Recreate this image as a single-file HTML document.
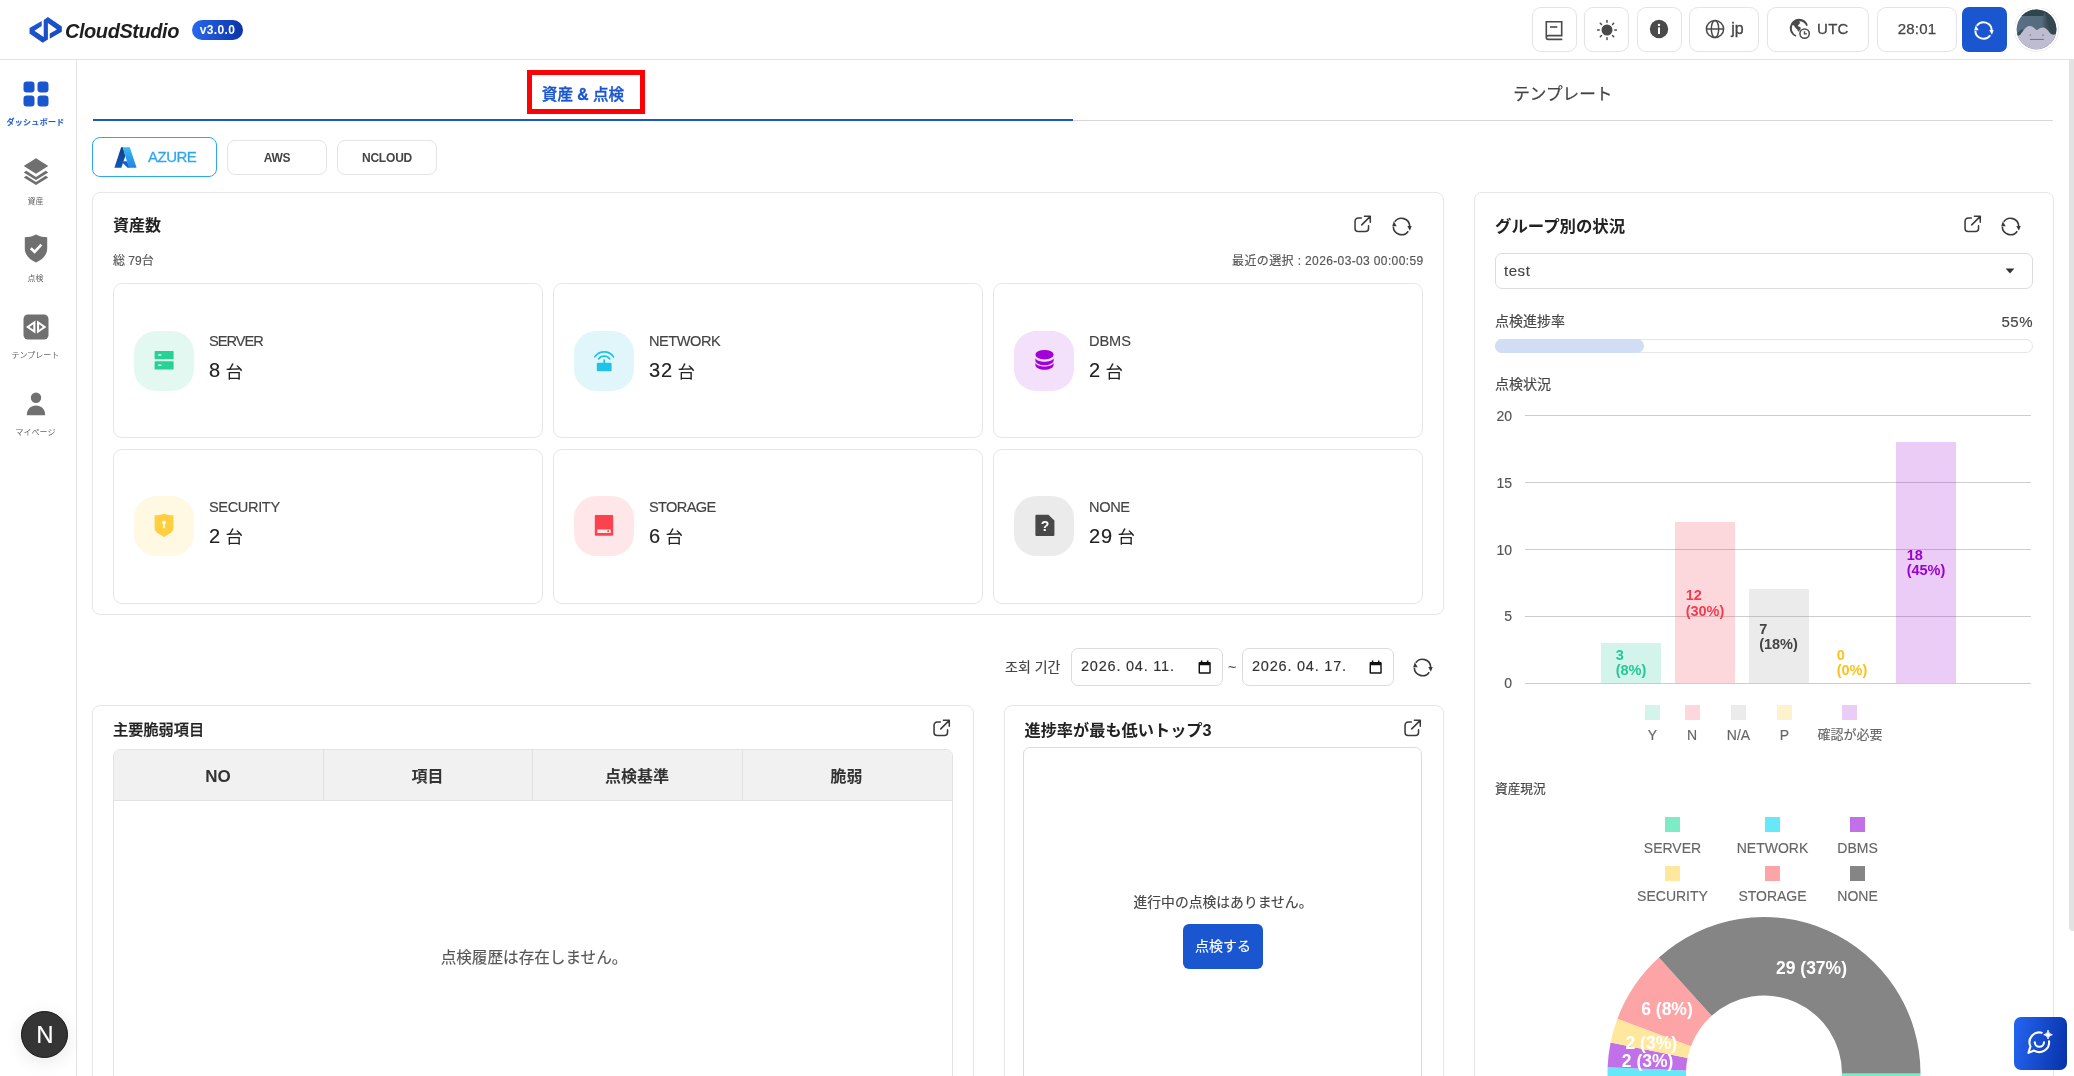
<!DOCTYPE html>
<html lang="ja">
<head>
<meta charset="utf-8">
<title>CloudStudio</title>
<style>
*{box-sizing:border-box;margin:0;padding:0}
html,body{width:2074px;height:1076px;overflow:hidden;background:#fff}
body{will-change:transform;position:relative;font-family:"Liberation Sans","Noto Sans CJK JP",sans-serif;color:#333;font-size:14px}
.a{position:absolute}
.t{position:absolute;white-space:nowrap;line-height:20px}
.t:not(.b){-webkit-text-stroke-width:.15px}
.c{transform:translateX(-50%)}
.r{transform:translateX(-100%)}
.b{font-weight:700}
svg{display:block}
/* header */
#hdr{left:0;top:0;width:2074px;height:60px;border-bottom:1px solid #e2e2e2;background:#fff}
.hb{position:absolute;top:7px;height:45px;border:1px solid #e4e4e4;border-radius:9px;background:#fff}
/* sidebar */
#side{left:0;top:60px;width:77px;height:1016px;border-right:1px solid #e2e2e2;background:#fff}
.sl{position:absolute;left:0;width:71px;text-align:center;font-size:8px;line-height:12px;color:#666;white-space:nowrap}
/* cards */
.card{position:absolute;border:1px solid #e6e6e6;border-radius:8px;background:#fff}
.ic{position:absolute;width:60px;height:60px;border-radius:22px}
.lab{font-size:14.600px;margin-top:-.4px;color:#444;-webkit-text-stroke:.2px #444}
.val{font-size:20px;color:#222;line-height:26px;letter-spacing:.9px;word-spacing:-2px;margin-top:-.9px;-webkit-text-stroke:.2px #222}.val span{font-size:17.500px;position:relative;top:.5px;-webkit-text-stroke:0}
</style>
</head>
<body>
<!-- HEADER -->
<div id="hdr" class="a">
<!-- logo -->
<svg class="a" style="left:28px;top:15px" width="36" height="30" viewBox="0 0 36 30">
<defs><linearGradient id="lg1" x1="0" y1="0" x2="1" y2="1"><stop offset="0" stop-color="#1f5ad6"/><stop offset="1" stop-color="#1647bd"/></linearGradient></defs>
<path fill="url(#lg1)" d="M19.900 2 L33.800 11.400 V16.700 L21.750 23.750 V18.400 L28.900 14.400 L19.900 8 V24.400 L14.700 27.800 L1.500 18.400 V13.050 L13.700 6 V11.050 L6.400 15.700 L15.700 21.900 V5Z"/>
</svg>
<div class="t b" style="left:65px;top:18.500px;font-size:20px;line-height:24px;font-style:italic;color:#1f1f1f;letter-spacing:-.45px">CloudStudio</div>
<div class="a" style="left:192px;top:20px;width:51px;height:20px;border-radius:10px;background:linear-gradient(90deg,#2968ee,#0b34a6)"></div>
<div class="t b c" style="left:217.5px;top:20px;font-size:12px;line-height:20px;color:#fff;letter-spacing:.35px">v3.0.0</div>
<!-- buttons -->
<div class="hb" style="left:1532px;width:45px"><svg class="a" style="left:12.400px;top:12.500px" width="19" height="20" viewBox="0 0 19 20" fill="none" stroke="#4a4a4a" stroke-width="1.600"><path d="M1.300 16.500 V.800 H16.700 V14.600 H3.200 A1.900 1.900 0 0 0 3.200 18.400 H17.300"/><path d="M5 6 H12.300"/></svg></div>
<div class="hb" style="left:1584px;width:45px"><svg class="a" style="left:10.500px;top:11.200px" width="22" height="22" viewBox="0 0 22 22"><circle cx="11" cy="11" r="5.500" fill="#4a4a4a"/><g stroke="#4a4a4a" stroke-width="1.5" stroke-linecap="round"><path d="M11 1.6V3.2M11 18.8V20.4M1.6 11H3.2M18.8 11H20.4M4.3 4.3L5.5 5.5M16.5 16.5L17.7 17.7M4.3 17.7L5.5 16.5M16.5 5.5L17.7 4.3"/></g></svg></div>
<div class="hb" style="left:1637px;width:45px"><svg class="a" style="left:11px;top:11px" width="20" height="20" viewBox="0 0 20 20"><circle cx="10" cy="10" r="9.2" fill="#4a4a4a"/><circle cx="10" cy="5.9" r="1.2" fill="#fff"/><rect x="9" y="8.4" width="2" height="6.6" fill="#fff"/></svg></div>
<div class="hb" style="left:1689px;width:70px"><svg class="a" style="left:15px;top:11px" width="20" height="20" viewBox="0 0 20 20" fill="none" stroke="#4a4a4a" stroke-width="1.5"><circle cx="10" cy="10" r="8.6"/><ellipse cx="10" cy="10" rx="3.7" ry="8.6"/><path d="M1.4 10H18.6"/></svg><div class="t" style="left:41.300px;top:10px;font-size:16px;line-height:22px;color:#444;-webkit-text-stroke:.3px #444">jp</div></div>
<div class="hb" style="left:1767px;width:102px"><svg class="a" style="left:21px;top:10px" width="22" height="22" viewBox="0 0 22 22"><path fill="#4a4a4a" d="M10 .8a9.3 9.3 0 0 0-3.2 18l.5-1.5A7.7 7.7 0 0 1 3.600 7.000c1.400.300 2.200 1.200 2.600 2.600.5 1.500 2 1.200 2.400 2.700.2.800.8 1.300 1.600 1.200l.5-1.500c1.200-.500 1.300-1.900.6-2.800-.6-.700-1.800-.300-2.200-1.200-.4-1 .9-1.500 1.500-2.300.5-.700.400-1.900-.400-2.500A7.700 7.700 0 0 1 17.300 8l1.500-.4A9.300 9.300 0 0 0 10 .8z"/><circle cx="15.600" cy="15.600" r="4.700" fill="none" stroke="#4a4a4a" stroke-width="1.500"/><path d="M15.500 13.200v2.700h2.400" fill="none" stroke="#4a4a4a" stroke-width="1.400"/></svg><div class="t" style="left:49px;top:10px;font-size:15px;line-height:22px;color:#444;letter-spacing:.3px;-webkit-text-stroke:.3px #444">UTC</div></div>
<div class="hb" style="left:1877px;width:80px"><div class="t c" style="left:39px;top:10px;font-size:15px;line-height:22px;color:#444;letter-spacing:.2px;-webkit-text-stroke:.25px #444">28:01</div></div>
<div class="a" style="left:1962px;top:7px;width:45px;height:45px;border-radius:7px;background:#1a56d0"><svg class="a" style="left:11.400px;top:12.600px" width="21" height="21" viewBox="0 0 21 21" fill="none" stroke="#fff" stroke-width="2"><path d="M3.780 5.800 A8.200 8.200 0 0 1 18.700 10.200"/><path d="M17.220 15.200 A8.200 8.200 0 0 1 2.300 10.800"/><path d="M16.300 9.900 H20.700 L18.900 14.700Z" fill="#fff" stroke="none"/><path d="M1.200 10.300 H5.700 L2.800 5.200Z" fill="#fff" stroke="none"/></svg></div>
<!-- avatar -->
<svg class="a" style="left:2015px;top:8px" width="44" height="44" viewBox="0 0 44 44"><defs><clipPath id="av"><circle cx="21.500" cy="21.300" r="19.900"/></clipPath><linearGradient id="avg" x1="0" y1="0" x2="1" y2="0"><stop offset="0" stop-color="#586f86"/><stop offset=".6" stop-color="#556c7c"/><stop offset=".72" stop-color="#3b505a"/><stop offset="1" stop-color="#35485a"/></linearGradient></defs><circle cx="21.500" cy="21.300" r="22.100" fill="#fff" stroke="#e9e9e9" stroke-width=".9"/><g clip-path="url(#av)"><rect width="44" height="44" fill="url(#avg)"/><path d="M0 0 H44 V9 L30 4.500 L28 8 H5 L0 12Z" fill="#2f454b"/><path d="M29.500 4.500 L44 9 V26 L36 25 Z" fill="#34474f" opacity=".85"/><path d="M0 29 L2.100 27.850 C4 27.600 4.800 27 5.500 26.300 C6.700 25 7.600 23.300 8.600 22.100 C10.200 20.300 11.800 18.500 13.800 18.100 C15.200 17.900 16.400 18.100 17.500 18.700 C19 19.600 20.400 21.600 21.900 21.900 C23 21.800 24.200 20.500 25.300 20 C26.500 19.500 27.700 19.300 28.900 19.500 C30.300 19.900 31.500 21 32.600 22.100 C33.700 23.300 34.600 24.900 35.700 25.800 C36.500 26.500 37.400 26.800 38.300 26.800 C39.600 26.700 40.800 26 42 25.250 L44 24 V44 H0Z" fill="#bebcd1"/><path d="M2 28 C4 27.600 4.800 27 5.500 26.300 C6.700 25 7.600 23.300 8.600 22.100 L7 21 L1.500 26Z" fill="#2f454b" opacity=".8"/><circle cx="15.300" cy="27.100" r=".95" fill="#8d8aa0"/><circle cx="28" cy="27.200" r=".95" fill="#8d8aa0"/><path d="M14.900 31.450H28.900" stroke="#6d6a80" stroke-width=".9"/></g></svg>
</div>
<!-- SIDEBAR -->
<div id="side" class="a">
<!-- coords relative to sidebar (top=60) -->
<svg class="a" style="left:23px;top:21px" width="26" height="26" viewBox="0 0 26 26" fill="#1a56d0"><rect x="0.500" y="0.500" width="11" height="11" rx="3.200"/><rect x="14.500" y="0.500" width="11" height="11" rx="3.200"/><rect x="0.500" y="14.500" width="11" height="11" rx="3.200"/><rect x="14.500" y="14.500" width="11" height="11" rx="3.200"/></svg>
<div class="sl" style="top:57px;color:#1a56d0;letter-spacing:.3px;font-weight:500;-webkit-text-stroke:.2px #1a56d0">ダッシュボード</div>
<svg class="a" style="left:23px;top:98px" width="26" height="28" viewBox="0 0 26 28" fill="#707070"><path d="M13 0.300 L25.300 8 L13 15.700 L0.700 8 Z"/><path d="M3.300 12.800 L13 18.900 L22.700 12.800 L25.300 14.400 L13 22.100 L0.700 14.400 Z"/><path d="M3.300 17.800 L13 23.900 L22.700 17.800 L25.300 19.400 L13 27.100 L0.700 19.400 Z"/></svg>
<div class="sl" style="top:136px">資産</div>
<svg class="a" style="left:24px;top:174px" width="24" height="29" viewBox="0 0 24 29"><path fill="#707070" d="M12 0.500 C8 2.600 4.500 3.200 0.800 3.200 V14.500 C0.800 21 5.500 25.600 12 28.500 C18.500 25.600 23.200 21 23.200 14.500 V3.200 C19.500 3.200 16 2.600 12 0.500Z"/><path d="M6.800 14.200 L10.600 17.800 L17.400 10.600" fill="none" stroke="#fff" stroke-width="2.600"/></svg>
<div class="sl" style="top:213px">点検</div>
<svg class="a" style="left:23px;top:254px" width="26" height="26" viewBox="0 0 26 26"><rect x="0.500" y="0.500" width="25" height="25" rx="4.500" fill="#707070"/><path fill="#fff" fill-rule="evenodd" d="M12.400 6.400 L3 13 L12.400 19.600 Z M10.300 10.300 V15.700 L6.500 13 Z"/><path fill="#fff" fill-rule="evenodd" d="M14 6.400 L23.400 13 L14 19.600 Z M16.100 10.300 V15.700 L19.900 13 Z"/></svg>
<div class="sl" style="top:290px">テンプレート</div>
<svg class="a" style="left:26px;top:332px" width="20" height="24" viewBox="0 0 20 24" fill="#707070"><circle cx="10" cy="5.700" r="5.200"/><path d="M0.800 23.200 C0.800 16.800 4.800 13.400 10 13.400 C15.200 13.400 19.200 16.800 19.200 23.200 Z"/></svg>
<div class="sl" style="top:367px">マイページ</div>
<!-- N button -->
<div class="a" style="left:21px;top:951px;width:47px;height:47px;border-radius:50%;background:#353535;border:1.500px solid #141414;box-shadow:0 4px 18px rgba(0,0,0,.09)"></div>
<div class="t c" style="left:44.800px;top:962.300px;font-size:24px;line-height:26px;color:#fff">N</div>
</div>
<!-- MAIN -->
<div id="main">
<!-- tabs -->
<div class="a" style="left:93px;top:119px;width:980px;height:2px;background:#1a56d0"></div>
<div class="a" style="left:1073px;top:120px;width:980px;height:1px;background:#d8d8d8"></div>
<div class="a" style="left:526.500px;top:70.300px;width:118px;height:44px;border:5px solid #fb0207"></div>
<div class="t c" style="left:583px;top:82.500px;font-size:15.600px;font-weight:500;-webkit-text-stroke:.35px #1a56d0;line-height:24px;color:#1a56d0">資産 <b>&amp;</b> 点検</div>
<div class="t c" style="left:1562.800px;top:83.400px;font-size:16.600px;line-height:24px;color:#444;-webkit-text-stroke:.25px #444">テンプレート</div>
<!-- provider buttons -->
<div class="a" style="left:92px;top:137px;width:125px;height:40px;border:1px solid #2ea7f2;border-radius:8px"></div>
<svg class="a" style="left:114px;top:146px" width="23" height="23" viewBox="0 0 23 23"><defs><linearGradient id="az1" x1="0" y1="0" x2="0" y2="1"><stop offset="0" stop-color="#123c84"/><stop offset="1" stop-color="#0f58bd"/></linearGradient><linearGradient id="az2" x1="0" y1="0" x2="0" y2="1"><stop offset="0" stop-color="#36bff3"/><stop offset="1" stop-color="#2580e2"/></linearGradient></defs><path fill="url(#az1)" d="M7.150 1.140 H8.900 L11.300 9.900 L7.400 21.870 H.4Z"/><path fill="#1160d3" d="M6.900 15.200 H13 L15.600 21.870 H13.660Z"/><path fill="url(#az2)" d="M8.840 1.140 H15.830 L22.580 21.870 H15 L12.940 15.200 L11.250 9.900Z"/></svg>
<div class="t" style="left:148px;top:146.600px;font-size:15px;color:#2ea7f2;letter-spacing:-.5px;-webkit-text-stroke:.3px #2ea7f2">AZURE</div>
<div class="a" style="left:227px;top:140px;width:100px;height:35px;border:1px solid #e4e4e4;border-radius:8px"></div>
<div class="t b c" style="left:277px;top:148px;font-size:12px;color:#444;letter-spacing:-.2px">AWS</div>
<div class="a" style="left:337px;top:140px;width:100px;height:35px;border:1px solid #e4e4e4;border-radius:8px"></div>
<div class="t b c" style="left:387px;top:148px;font-size:12px;color:#444;letter-spacing:-.2px">NCLOUD</div>
<!-- asset card -->
<div class="card" style="left:92px;top:192px;width:1352px;height:423px"></div>
<div class="t b" style="left:113px;top:214px;font-size:16px;line-height:24px;color:#222">資産数</div>
<svg class="a" style="left:1353.2px;top:214.6px" width="18.600" height="18.600" viewBox="0 0 20 20" fill="none" stroke="#3a3a3a" stroke-width="1.650" stroke-linecap="round" stroke-linejoin="round"><path d="M9 3.300 H5.500 A3.300 3.300 0 0 0 2.200 6.600 V14.500 A3.300 3.300 0 0 0 5.500 17.800 H13.400 A3.300 3.300 0 0 0 16.700 14.500 V11.700"/><path d="M9.400 10.600 L18 2 M12.300 1.400 H18.600 V7.700"/></svg>
<svg class="a" style="left:1390.5px;top:215.5px" width="21" height="21" viewBox="0 0 21 21" fill="none" stroke="#3a3a3a" stroke-width="1.600"><path d="M3.780 5.800 A8.200 8.200 0 0 1 18.700 10.200"/><path d="M17.220 15.200 A8.200 8.200 0 0 1 2.300 10.800"/><path d="M16.300 9.900 H20.700 L18.900 14.700Z" fill="#3a3a3a" stroke="none"/><path d="M1.200 10.300 H5.700 L2.800 5.200Z" fill="#3a3a3a" stroke="none"/></svg>
<div class="t" style="left:113px;top:251px;font-size:12px;color:#555">総 79台</div>
<div class="t r" style="left:1423.500px;top:251px;font-size:12px;letter-spacing:.37px;color:#555">最近の選択 : 2026-03-03 00:00:59</div>
<div class="card" style="left:113px;top:283px;width:430px;height:155px;border-radius:9px"></div>
<div class="ic" style="left:134px;top:330.5px;background:#e3f8f0"><svg class="a" style="left:20px;top:19px" width="20" height="21" viewBox="0 0 20 21" fill="#28d196"><path fill-rule="evenodd" d="M1.200 1 H19 a.6.6 0 0 1 .6.6 V8.600 a.6.6 0 0 1-.6.6 H1.200 a.6.6 0 0 1-.6-.6 V1.600 a.6.6 0 0 1 .6-.6Z M4.200 4.300 V5.700 H7.400 V4.300Z"/><path fill-rule="evenodd" d="M1.200 11.300 H19 a.6.6 0 0 1 .6.6 V18.900 a.6.6 0 0 1-.6.6 H1.200 a.6.6 0 0 1-.6-.6 V11.900 a.6.6 0 0 1 .6-.6Z M4.200 14.600 V16 H7.400 V14.600Z"/></svg></div>
<div class="t lab" style="left:209px;top:331.5px;letter-spacing:-1.00px">SERVER</div>
<div class="t val" style="left:209px;top:358px">8 <span>台</span></div>

<div class="card" style="left:553px;top:283px;width:430px;height:155px;border-radius:9px"></div>
<div class="ic" style="left:574px;top:330.5px;background:#e0f6fb"><svg class="a" style="left:19px;top:18px" width="23" height="23" viewBox="0 0 23 23"><g fill="none" stroke="#1fc3e6" stroke-width="1.700" stroke-linecap="round"><path d="M1.900 7.800 A11.300 11.300 0 0 1 20.500 7.800"/><path d="M5.600 9.900 A7 7 0 0 1 16.800 9.900"/></g><rect x="10.300" y="10.400" width="1.800" height="4" fill="#1fc3e6"/><rect x="3.800" y="13.700" width="14.800" height="8.500" rx="1" fill="#1fc3e6"/></svg></div>
<div class="t lab" style="left:649px;top:331.5px;letter-spacing:-0.48px">NETWORK</div>
<div class="t val" style="left:649px;top:358px">32 <span>台</span></div>

<div class="card" style="left:993px;top:283px;width:430px;height:155px;border-radius:9px"></div>
<div class="ic" style="left:1014px;top:330.5px;background:#f3e0fa"><svg class="a" style="left:20.700px;top:18.300px" width="19" height="21.850" viewBox="0 0 20 23" fill="#a100d6"><ellipse cx="10" cy="6" rx="9.600" ry="5"/><path d="M.4 9.700 C2 12.600 6 13.300 10 13.300 C14 13.300 18 12.600 19.600 9.700 V12.200 C19.600 15 15.300 17.200 10 17.200 C4.700 17.200 .4 15 .4 12.200Z"/><path d="M.4 14.700 C2 17.600 6 18.300 10 18.300 C14 18.300 18 17.600 19.600 14.700 V16.800 C19.600 19.600 15.300 21.800 10 21.800 C4.700 21.800 .4 19.600 .4 16.800Z"/></svg></div>
<div class="t lab" style="left:1089px;top:331.5px;letter-spacing:-0.10px">DBMS</div>
<div class="t val" style="left:1089px;top:358px">2 <span>台</span></div>

<div class="card" style="left:113px;top:448.5px;width:430px;height:155px;border-radius:9px"></div>
<div class="ic" style="left:134px;top:496.0px;background:#fff8e3"><svg class="a" style="left:20px;top:17px" width="20" height="25" viewBox="0 0 20 25"><path fill="#ffcf40" d="M10 .8 C7 2 4 2.300 .6 2.300 V15.300 C.6 18.300 2.600 20 10 24 C17.400 20 19.400 18.300 19.400 15.300 V2.300 C16 2.300 13 2 10 .8Z"/><circle cx="10" cy="9.500" r="1.800" fill="#fff"/><rect x="9.200" y="10" width="1.600" height="5.200" rx=".5" fill="#fff"/></svg></div>
<div class="t lab" style="left:209px;top:497.0px;letter-spacing:-0.38px">SECURITY</div>
<div class="t val" style="left:209px;top:523.5px">2 <span>台</span></div>

<div class="card" style="left:553px;top:448.5px;width:430px;height:155px;border-radius:9px"></div>
<div class="ic" style="left:574px;top:496.0px;background:#ffe6e8"><svg class="a" style="left:20px;top:18px" width="20" height="23" viewBox="0 0 20 23"><path fill-rule="evenodd" fill="#fb4350" d="M1.800 .9 H18.200 a1 1 0 0 1 1 1 V20.700 a1 1 0 0 1-1 1 H1.800 a1 1 0 0 1-1-1 V1.900 a1 1 0 0 1 1-1Z M3.300 15.600 V19 H16.700 V15.600Z"/><circle cx="14.200" cy="17.300" r="1" fill="#fb4350"/></svg></div>
<div class="t lab" style="left:649px;top:497.0px;letter-spacing:-0.66px">STORAGE</div>
<div class="t val" style="left:649px;top:523.5px">6 <span>台</span></div>

<div class="card" style="left:993px;top:448.5px;width:430px;height:155px;border-radius:9px"></div>
<div class="ic" style="left:1014px;top:496.0px;background:#ebebeb"><svg class="a" style="left:20.500px;top:18px" width="20" height="23" viewBox="0 0 20 23"><path fill="#484848" d="M1.400 .8 H13.400 L19.400 6.600 V21 a1 1 0 0 1-1 1 H1.400 a1 1 0 0 1-1-1 V1.800 a1 1 0 0 1 1-1Z"/><text x="10" y="16.800" font-family="Liberation Sans, sans-serif" font-weight="700" font-size="14" fill="#fff" text-anchor="middle">?</text></svg></div>
<div class="t lab" style="left:1089px;top:497.0px;letter-spacing:-0.36px">NONE</div>
<div class="t val" style="left:1089px;top:523.5px">29 <span>台</span></div>

<div class="t" style="left:1005px;top:657px;font-size:14px;color:#444;font-family:'Liberation Sans','Noto Sans CJK KR',sans-serif">조회 기간</div>
<div class="a" style="left:1071px;top:648px;width:152px;height:38px;border:1px solid #dcdcdc;border-radius:7px"></div>
<div class="t" style="left:1081px;top:656px;font-size:14.500px;color:#333;letter-spacing:.78px">2026. 04. 11.</div>
<svg class="a" style="left:1198px;top:660px" width="13.300" height="14.250" viewBox="0 0 14 15"><path fill="#111" fill-rule="evenodd" d="M3 .5 H4.600 V2 H9.400 V.5 H11 V2 H12.200 a1.200 1.200 0 0 1 1.200 1.200 V13.300 a1.200 1.200 0 0 1-1.200 1.200 H1.800 a1.200 1.200 0 0 1-1.200-1.200 V3.200 A1.200 1.200 0 0 1 1.800 2 H3Z M2.100 5.600 V13 H11.900 V5.600Z"/></svg>
<div class="t" style="left:1228px;top:657px;font-size:14px;color:#555">~</div>
<div class="a" style="left:1242px;top:648px;width:152px;height:38px;border:1px solid #dcdcdc;border-radius:7px"></div>
<div class="t" style="left:1252px;top:656px;font-size:14.500px;color:#333;letter-spacing:.78px">2026. 04. 17.</div>
<svg class="a" style="left:1369px;top:660px" width="13.300" height="14.250" viewBox="0 0 14 15"><path fill="#111" fill-rule="evenodd" d="M3 .5 H4.600 V2 H9.400 V.5 H11 V2 H12.200 a1.200 1.200 0 0 1 1.200 1.200 V13.300 a1.200 1.200 0 0 1-1.200 1.200 H1.800 a1.200 1.200 0 0 1-1.200-1.200 V3.200 A1.200 1.200 0 0 1 1.800 2 H3Z M2.100 5.600 V13 H11.900 V5.600Z"/></svg>
<svg class="a" style="left:1411.5px;top:657px" width="21" height="21" viewBox="0 0 21 21" fill="none" stroke="#3a3a3a" stroke-width="1.600"><path d="M3.780 5.800 A8.200 8.200 0 0 1 18.700 10.200"/><path d="M17.220 15.200 A8.200 8.200 0 0 1 2.300 10.800"/><path d="M16.300 9.900 H20.700 L18.900 14.700Z" fill="#3a3a3a" stroke="none"/><path d="M1.200 10.300 H5.700 L2.800 5.200Z" fill="#3a3a3a" stroke="none"/></svg>

<div class="card" style="left:92px;top:705px;width:882px;height:400px"></div>
<div class="t" style="left:113px;top:717.500px;font-size:15.200px;font-weight:500;-webkit-text-stroke:.25px #222;line-height:24px;color:#222">主要脆弱項目</div>
<svg class="a" style="left:932.2px;top:718.6px" width="18.600" height="18.600" viewBox="0 0 20 20" fill="none" stroke="#3a3a3a" stroke-width="1.650" stroke-linecap="round" stroke-linejoin="round"><path d="M9 3.300 H5.500 A3.300 3.300 0 0 0 2.200 6.600 V14.500 A3.300 3.300 0 0 0 5.500 17.800 H13.400 A3.300 3.300 0 0 0 16.700 14.500 V11.700"/><path d="M9.400 10.600 L18 2 M12.300 1.400 H18.600 V7.700"/></svg>
<div class="a" style="left:113px;top:749px;width:840px;height:360px;border:1px solid #e2e2e2;border-radius:7px;overflow:hidden"><div class="a" style="left:0;top:0;width:840px;height:51px;background:#f1f1f1;border-bottom:1px solid #e2e2e2"></div><div class="a" style="left:209px;top:0;width:1px;height:51px;background:#e2e2e2"></div><div class="a" style="left:418px;top:0;width:1px;height:51px;background:#e2e2e2"></div><div class="a" style="left:627.500px;top:0;width:1px;height:51px;background:#e2e2e2"></div></div>
<div class="t b c" style="left:218px;top:764.600px;font-size:17px;line-height:24px;color:#333">NO</div>
<div class="t b c" style="left:427.500px;top:764.600px;font-size:16px;line-height:24px;color:#333">項目</div>
<div class="t b c" style="left:637px;top:764.600px;font-size:16px;line-height:24px;color:#333">点検基準</div>
<div class="t b c" style="left:846.500px;top:764.600px;font-size:16px;line-height:24px;color:#333">脆弱</div>
<div class="t c" style="left:534px;top:946px;font-size:15.600px;line-height:24px;color:#555">点検履歴は存在しません。</div>
<div class="card" style="left:1004px;top:705px;width:440px;height:400px"></div>
<div class="t b" style="left:1024.500px;top:718px;font-size:16.200px;line-height:24px;color:#222">進捗率が最も低いトップ3</div>
<svg class="a" style="left:1403.2px;top:718.6px" width="18.600" height="18.600" viewBox="0 0 20 20" fill="none" stroke="#3a3a3a" stroke-width="1.650" stroke-linecap="round" stroke-linejoin="round"><path d="M9 3.300 H5.500 A3.300 3.300 0 0 0 2.200 6.600 V14.500 A3.300 3.300 0 0 0 5.500 17.800 H13.400 A3.300 3.300 0 0 0 16.700 14.500 V11.700"/><path d="M9.400 10.600 L18 2 M12.300 1.400 H18.600 V7.700"/></svg>
<div class="a" style="left:1023px;top:747px;width:399px;height:360px;border:1px solid #dcdcdc;border-radius:7px"></div>
<div class="t c" style="left:1223px;top:892.500px;font-size:13.800px;color:#444">進行中の点検はありません。</div>
<div class="a" style="left:1183px;top:924px;width:80px;height:45px;border-radius:6px;background:#1a56d0"></div>
<div class="t c" style="left:1223px;top:936px;font-size:14px;color:#fff">点検する</div>

<div class="card" style="left:1474px;top:192px;width:580px;height:900px"></div>
<div class="t b" style="left:1495px;top:214px;font-size:16.400px;line-height:24px;color:#222">グループ別の状況</div>
<svg class="a" style="left:1963.2px;top:214.6px" width="18.600" height="18.600" viewBox="0 0 20 20" fill="none" stroke="#3a3a3a" stroke-width="1.650" stroke-linecap="round" stroke-linejoin="round"><path d="M9 3.300 H5.500 A3.300 3.300 0 0 0 2.200 6.600 V14.500 A3.300 3.300 0 0 0 5.500 17.800 H13.400 A3.300 3.300 0 0 0 16.700 14.500 V11.700"/><path d="M9.400 10.600 L18 2 M12.300 1.400 H18.600 V7.700"/></svg>
<svg class="a" style="left:2000px;top:215.5px" width="21" height="21" viewBox="0 0 21 21" fill="none" stroke="#3a3a3a" stroke-width="1.600"><path d="M3.780 5.800 A8.200 8.200 0 0 1 18.700 10.200"/><path d="M17.220 15.200 A8.200 8.200 0 0 1 2.300 10.800"/><path d="M16.300 9.900 H20.700 L18.900 14.700Z" fill="#3a3a3a" stroke="none"/><path d="M1.200 10.300 H5.700 L2.800 5.200Z" fill="#3a3a3a" stroke="none"/></svg>
<div class="a" style="left:1495px;top:253px;width:538px;height:36px;border:1px solid #dcdcdc;border-radius:7px"></div>
<div class="t" style="left:1504px;top:261px;font-size:15px;letter-spacing:.55px;color:#444">test</div>
<svg class="a" style="left:2005px;top:268px" width="10" height="6" viewBox="0 0 10 6"><path d="M.6 .6 H9.400 L5 5.400Z" fill="#333"/></svg>
<div class="t" style="left:1495px;top:311px;font-size:14px;color:#444">点検進捗率</div>
<div class="t r" style="left:2033px;top:311.500px;font-size:15px;letter-spacing:.5px;color:#444">55%</div>
<div class="a" style="left:1495px;top:338.500px;width:538px;height:14px;border:1px solid #e6e6e6;border-radius:7px;background:#fff"></div>
<div class="a" style="left:1495px;top:338.500px;width:149px;height:14px;border-radius:7px;background:#d1dcf5"></div>
<div class="t" style="left:1495px;top:373.500px;font-size:14px;color:#444">点検状況</div>
<div class="a" style="left:1525px;top:682.5px;width:506px;height:1px;background:#cdcdcd"></div><div class="t r" style="left:1512px;top:673.3px;font-size:14px;color:#555">0</div><div class="a" style="left:1525px;top:615.6px;width:506px;height:1px;background:#cdcdcd"></div><div class="t r" style="left:1512px;top:606.4px;font-size:14px;color:#555">5</div><div class="a" style="left:1525px;top:548.7px;width:506px;height:1px;background:#cdcdcd"></div><div class="t r" style="left:1512px;top:539.5px;font-size:14px;color:#555">10</div><div class="a" style="left:1525px;top:481.8px;width:506px;height:1px;background:#cdcdcd"></div><div class="t r" style="left:1512px;top:472.6px;font-size:14px;color:#555">15</div><div class="a" style="left:1525px;top:414.9px;width:506px;height:1px;background:#cdcdcd"></div><div class="t r" style="left:1512px;top:405.7px;font-size:14px;color:#555">20</div><div class="a" style="left:1601px;top:642.9px;width:60px;height:40.1px;background:rgba(33,201,151,.2)"></div><div class="t b c" style="left:1631px;top:647.6px;font-size:14.500px;line-height:15.200px;color:#21c997;text-align:left">3<br>(8%)</div><div class="a" style="left:1675px;top:522.4px;width:60px;height:160.6px;background:rgba(242,61,79,.2)"></div><div class="t b c" style="left:1705px;top:588.3px;font-size:14.500px;line-height:15.200px;color:#f23d4f;text-align:left">12<br>(30%)</div><div class="a" style="left:1748.5px;top:589.3px;width:60px;height:93.7px;background:rgba(150,150,150,.19)"></div><div class="t b c" style="left:1778.5px;top:621.8px;font-size:14.500px;line-height:15.200px;color:#444;text-align:left">7<br>(18%)</div><div class="t b c" style="left:1852px;top:647.6px;font-size:14.500px;line-height:15.200px;color:#fcc21b;text-align:left">0<br>(0%)</div><div class="a" style="left:1896px;top:442.2px;width:60px;height:240.8px;background:rgba(155,0,211,.2)"></div><div class="t b c" style="left:1926px;top:548.2px;font-size:14.500px;line-height:15.200px;color:#9b00d3;text-align:left">18<br>(45%)</div><div class="a" style="left:1645px;top:705px;width:15px;height:15px;background:rgba(33,201,151,.2)"></div><div class="t c" style="left:1652.5px;top:724.500px;font-size:14px;color:#666">Y</div><div class="a" style="left:1685px;top:705px;width:15px;height:15px;background:rgba(242,61,79,.2)"></div><div class="t c" style="left:1692px;top:724.500px;font-size:14px;color:#666">N</div><div class="a" style="left:1731px;top:705px;width:15px;height:15px;background:rgba(150,150,150,.19)"></div><div class="t c" style="left:1738.5px;top:724.500px;font-size:14px;color:#666">N/A</div><div class="a" style="left:1777px;top:705px;width:15px;height:15px;background:rgba(252,194,27,.22)"></div><div class="t c" style="left:1784.5px;top:724.500px;font-size:14px;color:#666">P</div><div class="a" style="left:1842px;top:705px;width:15px;height:15px;background:rgba(155,0,211,.2)"></div><div class="t c" style="left:1850px;top:724.500px;font-size:13px;color:#666">確認が必要</div>
<div class="t" style="left:1495px;top:778.500px;font-size:12.700px;color:#444">資産現況</div>
<div class="a" style="left:1665.0px;top:817.0px;width:15px;height:15px;background:#7debc6"></div><div class="t c" style="left:1672.5px;top:837.5px;font-size:14px;color:#666">SERVER</div><div class="a" style="left:1765.0px;top:817.0px;width:15px;height:15px;background:#67e8f9"></div><div class="t c" style="left:1772.5px;top:837.5px;font-size:14px;color:#666">NETWORK</div><div class="a" style="left:1850.0px;top:817.0px;width:15px;height:15px;background:#c270e8"></div><div class="t c" style="left:1857.5px;top:837.5px;font-size:14px;color:#666">DBMS</div><div class="a" style="left:1665.0px;top:866.0px;width:15px;height:15px;background:#ffe89e"></div><div class="t c" style="left:1672.5px;top:885.5px;font-size:14px;color:#666">SECURITY</div><div class="a" style="left:1765.0px;top:866.0px;width:15px;height:15px;background:#fda4a7"></div><div class="t c" style="left:1772.5px;top:885.5px;font-size:14px;color:#666">STORAGE</div><div class="a" style="left:1850.0px;top:866.0px;width:15px;height:15px;background:#858585"></div><div class="t c" style="left:1857.5px;top:885.5px;font-size:14px;color:#666">NONE</div>
<svg class="a" style="left:1594px;top:907px" width="340" height="169" viewBox="1594 907 340 169"><path fill="#7debc6" d="M1920.50 1073.50 A156.5 156.5 0 0 1 1889.88 1166.49 L1826.74 1119.85 A78 78 0 0 0 1842.00 1073.50Z"/><path fill="#67e8f9" d="M1889.88 1166.49 A156.5 156.5 0 0 1 1607.62 1067.28 L1686.06 1070.40 A78 78 0 0 0 1826.74 1119.85Z"/><path fill="#c270e8" d="M1607.62 1067.28 A156.5 156.5 0 0 1 1610.58 1042.59 L1687.54 1058.09 A78 78 0 0 0 1686.06 1070.40Z"/><path fill="#ffe89e" d="M1610.58 1042.59 A156.5 156.5 0 0 1 1617.42 1018.68 L1690.94 1046.18 A78 78 0 0 0 1687.54 1058.09Z"/><path fill="#fda4a7" d="M1617.42 1018.68 A156.5 156.5 0 0 1 1658.97 957.48 L1711.65 1015.67 A78 78 0 0 0 1690.94 1046.18Z"/><path fill="#858585" d="M1658.97 957.48 A156.5 156.5 0 0 1 1920.50 1073.50 L1842.00 1073.50 A78 78 0 0 0 1711.65 1015.67Z"/><text x="1647.6" y="1066.8" text-anchor="middle" font-family="Liberation Sans, sans-serif" font-weight="700" font-size="17.500" fill="#fff">2 (3%)</text><text x="1651.3" y="1048.6" text-anchor="middle" font-family="Liberation Sans, sans-serif" font-weight="700" font-size="17.500" fill="#fff">2 (3%)</text><text x="1667.0" y="1014.9" text-anchor="middle" font-family="Liberation Sans, sans-serif" font-weight="700" font-size="17.500" fill="#fff">6 (8%)</text><text x="1811.5" y="973.6" text-anchor="middle" font-family="Liberation Sans, sans-serif" font-weight="700" font-size="17.500" fill="#fff">29 (37%)</text></svg>
<!-- scrollbar + chat -->
<div class="a" style="left:2069px;top:59px;width:8px;height:872px;background:#e2e2e2;border-radius:0 0 0 4px"></div>
<div class="a" style="left:2014px;top:1017px;width:53px;height:53px;border-radius:7px;background:linear-gradient(100deg,#2566f2,#0731a8)"></div>
<svg class="a" style="left:2027px;top:1029px" width="28" height="28" viewBox="0 0 28 28" fill="none" stroke="#fff" stroke-width="2.100" stroke-linecap="round" stroke-linejoin="round"><path d="M14.670 3.740 A9.800 9.800 0 0 0 3.420 17.390 L1.440 23.900 L7.100 21.560 A9.800 9.800 0 0 0 22.060 12.400"/><path d="M7.800 13.200 A4.600 4.600 0 0 0 17 13.200"/><path d="M21.030 1.460 Q21.600 5.200 25.330 5.760 Q21.600 6.300 21.030 10.060 Q20.500 6.300 16.730 5.760 Q20.500 5.200 21.030 1.460Z" fill="#fff" stroke-width=".8"/></svg>

</div>
</body>
</html>
